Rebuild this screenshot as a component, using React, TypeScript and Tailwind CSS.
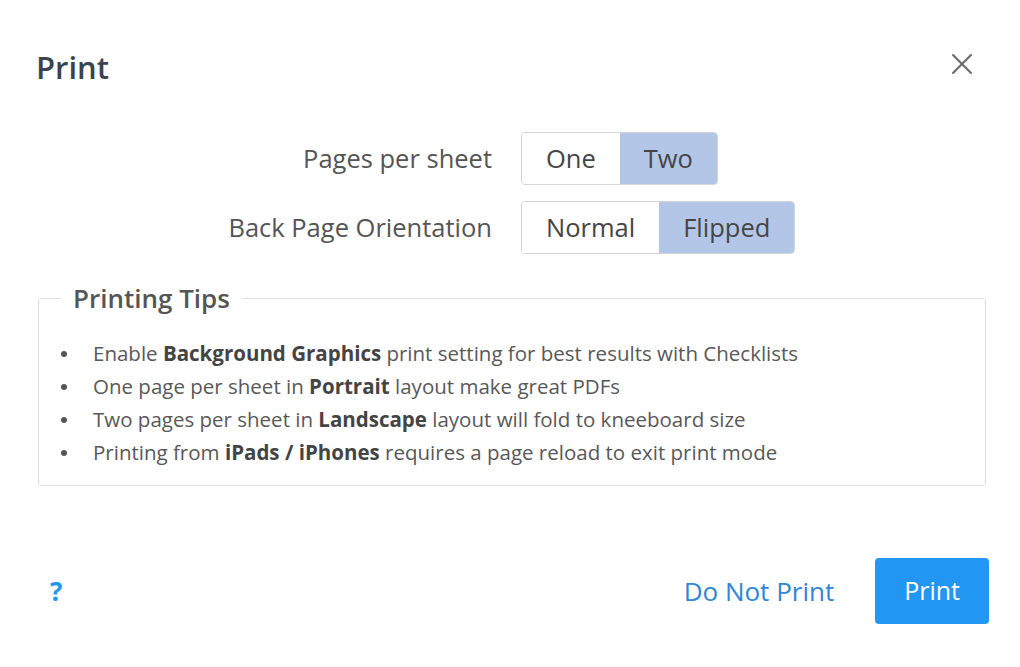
import { X } from 'lucide-react';

const tips = [
  { pre: 'Enable ', bold: 'Background Graphics', post: ' print setting for best results with Checklists' },
  { pre: 'One page per sheet in ', bold: 'Portrait', post: ' layout make great PDFs' },
  { pre: 'Two pages per sheet in ', bold: 'Landscape', post: ' layout will fold to kneeboard size' },
  { pre: 'Printing from ', bold: 'iPads / iPhones', post: ' requires a page reload to exit print mode' },
];

function Toggle({ options, selected }: { options: string[]; selected: string }) {
  return (
    <div className="flex h-[53px] border border-[#d4d4d4] rounded-[4px] overflow-hidden">
      {options.map((o) => (
        <div
          key={o}
          className={
            'flex items-center px-6 text-[25.5px] text-[#454545] ' +
            (o === selected ? 'bg-[#b3c6e8]' : 'bg-white')
          }
        >
          {o}
        </div>
      ))}
    </div>
  );
}

export default function App() {
  return (
    <div className="w-[1020px] h-[667px] bg-white flex flex-col font-['Open_Sans',sans-serif]">
      <div className="flex items-center justify-between pl-[36px] pr-[40px] pt-[46px]">
        <h1 className="text-[31px] font-semibold text-[#3c4350] leading-[42px]">Print</h1>
        <X className="w-[36px] h-[36px] text-[#6b6b6b] -mt-[6px]" strokeWidth={1.4} />
      </div>

      <div className="grid grid-cols-[456px_auto] gap-x-[29px] gap-y-[16px] ml-[36px] mt-[44px] items-center justify-start">
        <div className="text-right text-[25.5px] text-[#555]">Pages per sheet</div>
        <div className="flex">
          <Toggle options={['One', 'Two']} selected="Two" />
        </div>
        <div className="text-right text-[25.5px] text-[#555]">Back Page Orientation</div>
        <div className="flex">
          <Toggle options={['Normal', 'Flipped']} selected="Flipped" />
        </div>
      </div>

      <fieldset className="mr-[34px] ml-[38px] mt-[26px] border border-[#e0e0e0] rounded-[3px] px-[22px] pb-[16px]">
        <legend className="px-3 text-[26px] leading-[36px] font-semibold text-[#555]">Printing Tips</legend>
        <ul className="mt-[21px]">
          {tips.map((t) => (
            <li key={t.bold} className="flex items-center h-[33px] text-[20.5px] text-[#585858]">
              <span className="w-[6px] h-[6px] rounded-full bg-[#555] mr-[26px] shrink-0" />
              <span>
                {t.pre}
                <b className="font-bold text-[#444]">{t.bold}</b>
                {t.post}
              </span>
            </li>
          ))}
        </ul>
      </fieldset>

      <div className="mt-auto mb-[43px] flex items-center pl-[50px] pr-[31px]">
        <span className="text-[26px] font-bold text-[#2196f3]">?</span>
        <span className="ml-auto text-[26px] text-[#2e86d6] mr-[41px]">Do Not Print</span>
        <button className="h-[66px] px-[29px] rounded-[4px] bg-[#2196f3] text-white text-[25px]">Print</button>
      </div>
    </div>
  );
}
